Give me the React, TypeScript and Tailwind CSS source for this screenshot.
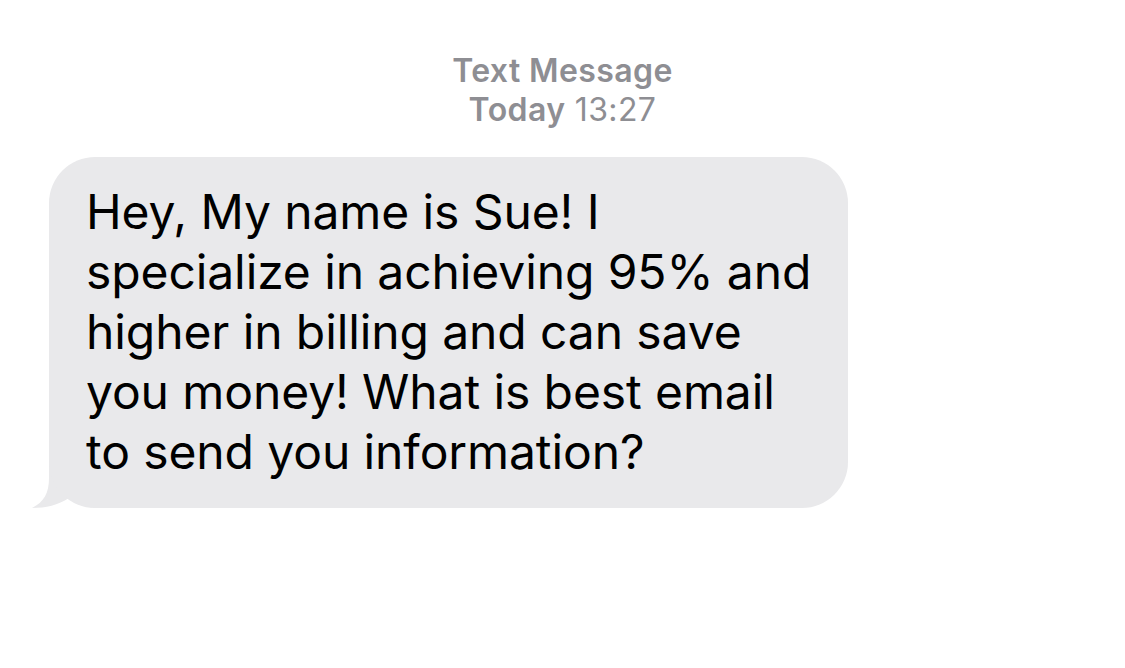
export default function App() {
  return (
    <div className="w-[1125px] h-[668px] bg-white flex flex-col" style={{ fontFamily: 'Inter, "Liberation Sans", Arial, sans-serif' }}>
      <div className="pt-[51px] flex flex-col items-center text-[#8e8e93] text-[32px] leading-[39px] tracking-[0.4px]">
        <div className="font-semibold">Text Message</div>
        <div><span className="font-semibold">Today</span> 13:27</div>
      </div>
      <div className="mt-[28px] ml-[49px] relative w-[799px]">
        <div className="bg-[#e9e9eb] rounded-[46px] pl-[37px] pr-[10px] pt-[25px] pb-[26px] text-black text-[48px] leading-[60px] tracking-[-0.1px] relative z-10 whitespace-nowrap">
          Hey, My name is Sue! I<br />
          specialize in achieving 95% and<br />
          higher in billing and can save<br />
          you money! What is best email<br />
          to send you information?
        </div>
        <svg className="absolute left-[-17px] bottom-0 z-0" width="70" height="60" viewBox="0 0 70 60">
          <path d="M17 10 L17 30 C17 45 12 54 0 60 C14 60 26 57 37 50 C45 57 55 60 70 60 L70 10 Z" fill="#e9e9eb" />
        </svg>
      </div>
    </div>
  );
}
